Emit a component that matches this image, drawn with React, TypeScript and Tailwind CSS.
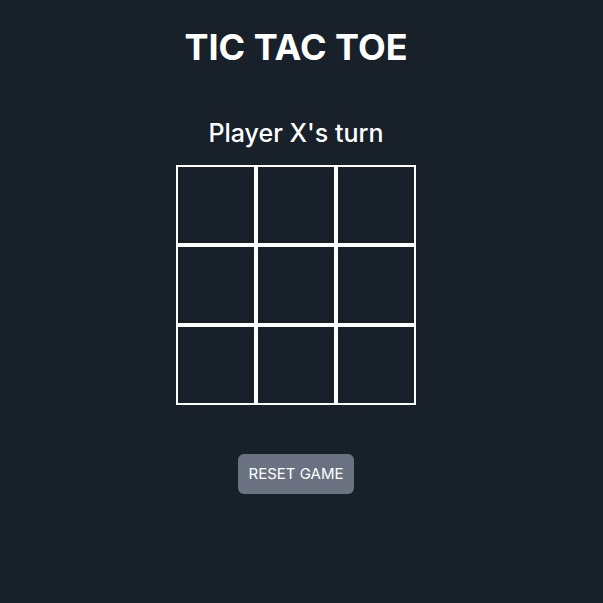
import React, { useState } from 'react';

export default function App() {
  const [board, setBoard] = useState<(string | null)[]>(Array(9).fill(null));
  const [xNext, setXNext] = useState(true);

  const play = (i: number) => {
    if (board[i]) return;
    const next = board.slice();
    next[i] = xNext ? 'X' : 'O';
    setBoard(next);
    setXNext(!xNext);
  };

  const reset = () => {
    setBoard(Array(9).fill(null));
    setXNext(true);
  };

  return (
    <div className="min-h-[603px] bg-[#18202a] text-white" style={{ fontFamily: 'Inter, sans-serif' }}>
      <div className="w-[592px] flex flex-col items-center">
        {/* Title */}
        <h1 className="mt-[27px] text-[36px] leading-[40px] font-bold">TIC TAC TOE</h1>

        {/* Status */}
        <h2 className="mt-[51px] text-[25px] leading-[30px] font-medium">
          Player {xNext ? 'X' : 'O'}'s turn
        </h2>

        {/* Board */}
        <div className="mt-[17px] grid grid-cols-3">
          {board.map((cell, i) => (
            <button
              key={i}
              onClick={() => play(i)}
              className="w-20 h-20 border-2 border-white text-4xl font-bold flex items-center justify-center"
            >
              {cell}
            </button>
          ))}
        </div>

        {/* Reset */}
        <button
          onClick={reset}
          className="mt-[49px] w-[116px] h-10 bg-gray-500 rounded-md text-[15px] text-white"
        >
          RESET GAME
        </button>
      </div>
    </div>
  );
}
